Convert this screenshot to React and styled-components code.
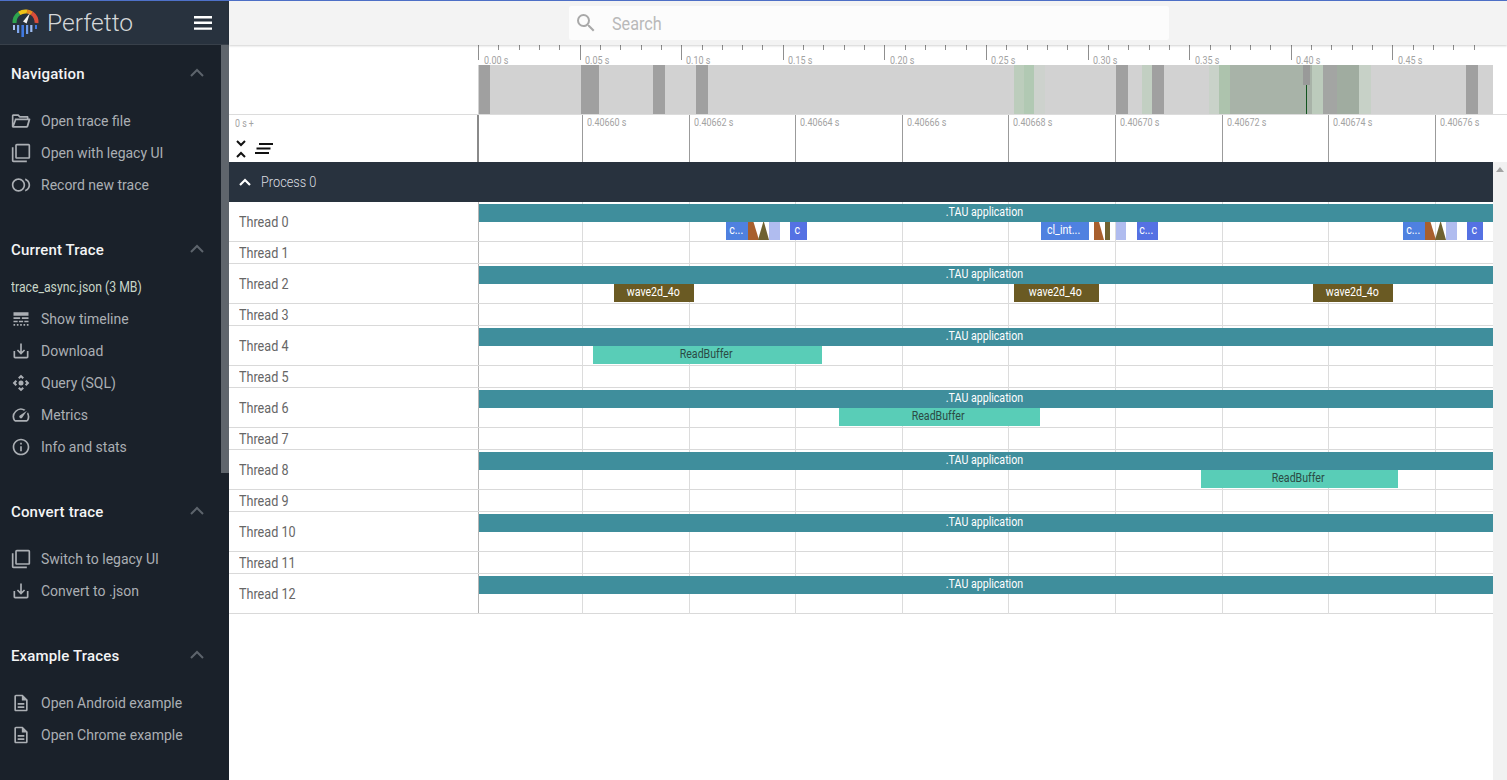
import React from 'react';
import styled, { createGlobalStyle } from 'styled-components';

const GlobalStyle = createGlobalStyle`
  html, body, #root {
    margin: 0;
    height: 100%;
    overflow: hidden;
  }
  body {
    font-family: Roboto, "Liberation Sans", sans-serif;
    background: #fff;
  }
`;

const TIME_START = 478;
const AXIS_TICK = 20.32;
const GRID_LINES = [582, 689, 795, 902, 1008, 1115, 1222, 1328, 1435];

const AppShell = styled.div`
  display: grid;
  grid-template-columns: 229px 1fr;
  height: 780px;
  border-top: 1px solid #4e71c9;
  box-sizing: border-box;
`;

const Sidebar = styled.nav`
  display: flex;
  flex-direction: column;
  background: #1a212a;
  min-height: 0;
  overflow: hidden;
`;

const SidebarHeader = styled.header`
  display: flex;
  align-items: center;
  height: 44px;
  flex: none;
  padding: 0 17px 0 12px;
  background: #28323e;
  border-bottom: 1px solid #38404a;
  box-sizing: border-box;
`;

const LogoName = styled.span`
  flex: 1;
  margin-left: 8px;
  font-size: 24.6px;
  font-weight: 300;
  color: #d5d7d9;
`;

const MenuButton = styled.svg`
  display: block;
  width: 18px;
  height: 14px;
`;

const SidebarBody = styled.div`
  position: relative;
  flex: 1;
  padding-right: 8px;
`;

const SidebarThumb = styled.div`
  position: absolute;
  top: 0;
  right: 0;
  width: 8px;
  height: 428px;
  background: #5f656c;
`;

const Section = styled.section`
  padding-top: ${p => p.$top}px;
`;

const SectionTitle = styled.h2`
  display: flex;
  align-items: center;
  justify-content: space-between;
  height: 24px;
  margin: 0 0 ${p => p.$gap}px;
  padding: 0 18px 0 11px;
  font-size: 15px;
  font-weight: 500;
  letter-spacing: 0.15px;
  color: #f3f4f5;
`;

const Chevron = styled.svg`
  width: 24px;
  height: 24px;
  margin: -3px -6px 0 0;
  fill: none;
  stroke: #5d646c;
  stroke-width: 2;
`;

const ItemList = styled.ul`
  margin: 0;
  padding: 0;
  list-style: none;
`;

const Item = styled.li`
  display: flex;
  align-items: center;
  gap: 10px;
  height: 32px;
  padding-left: 11px;
  font-size: 14px;
  color: #abafb4;
  svg {
    width: 20px;
    height: 20px;
    flex: none;
    fill: #abafb4;
  }
`;

const Narrow = styled.span`
  display: inline-block;
  white-space: nowrap;
  transform: scaleX(${p => p.$scale});
  transform-origin: ${p => p.$origin || 'left'} center;
`;

const TraceName = styled.div`
  height: 32px;
  padding-left: 11px;
  font-size: 15px;
  line-height: 32px;
  color: #c8d6c8;
`;

const Main = styled.main`
  display: flex;
  flex-direction: column;
  min-width: 0;
`;

const Topbar = styled.div`
  display: flex;
  justify-content: center;
  align-items: center;
  height: 44px;
  flex: none;
  padding-left: 2px;
  background: #f3f3f3;
  box-shadow: 0 1px 2px rgba(0, 0, 0, 0.18);
  position: relative;
  z-index: 2;
`;

const SearchBox = styled.div`
  display: flex;
  align-items: center;
  width: 600px;
  height: 34px;
  padding-left: 5px;
  box-sizing: border-box;
  gap: 14px;
  background: #fcfcfc;
  border-radius: 2px;
  font-size: 18px;
  color: #b9b9b9;
  svg {
    width: 24px;
    height: 24px;
    fill: #a9a9a9;
  }
`;

const OverviewPanel = styled.div`
  display: grid;
  grid-template-columns: 249px 1fr;
  height: 70px;
  flex: none;
  border-bottom: 1px solid #dcdcdc;
  box-sizing: border-box;
`;

const OverviewTrack = styled.div`
  position: relative;
  width: 1015px;
`;

const AxisTick = styled.i`
  position: absolute;
  top: 0;
  width: 1px;
  height: ${p => (p.$major ? 15 : 5)}px;
  background: #8f8f8f;
`;

const AxisLabel = styled.span`
  position: absolute;
  top: 8px;
  font-size: 11.5px;
  color: #a3a3a3;
  white-space: nowrap;
`;

const OverviewBar = styled.div`
  position: absolute;
  top: 20px;
  left: 0;
  right: 0;
  height: 49px;
  background: #d2d2d2;
`;

const OverviewBand = styled.i`
  position: absolute;
  top: 0;
  bottom: 0;
  background: ${p => p.$color};
`;

const MarkerHead = styled.i`
  position: absolute;
  top: 0;
  left: 825px;
  width: 7px;
  height: 20px;
  background: #999a99;
`;

const MarkerLine = styled.i`
  position: absolute;
  top: 20px;
  bottom: 0;
  left: 828px;
  width: 1px;
  background: #12541f;
`;

const TimeHeader = styled.div`
  display: grid;
  grid-template-columns: 249px 1fr;
  height: 47px;
  flex: none;
`;

const HeaderTools = styled.div`
  display: flex;
  flex-direction: column;
  justify-content: space-between;
  padding: 2px 0 4px 6px;
  box-sizing: border-box;
  font-size: 11px;
  color: #a3a3a3;
`;

const ToolIcons = styled.div`
  display: flex;
  align-items: center;
  gap: 8px;
  svg {
    display: block;
  }
`;

const HeaderScale = styled.div`
  position: relative;
  border-left: 2px solid #8a8a8a;
  margin-left: -1px;
`;

const ScaleLine = styled.i`
  position: absolute;
  top: 0;
  bottom: 0;
  width: 1px;
  background: #9b9b9b;
`;

const ScaleLabel = styled.span`
  position: absolute;
  top: 0;
  font-size: 11.5px;
  color: #a3a3a3;
  white-space: nowrap;
`;

const Workspace = styled.div`
  display: grid;
  grid-template-columns: 1fr 14px;
  flex: 1;
  min-height: 0;
`;

const FakeScrollbar = styled.div`
  background: #f1f1f1;
  padding-top: 5px;
  display: flex;
  justify-content: center;
  svg {
    width: 8px;
    height: 5px;
    fill: #a3a3a3;
  }
`;

const ProcessHeader = styled.div`
  display: flex;
  align-items: center;
  gap: 9px;
  height: 40px;
  padding-left: 9px;
  background: #28323e;
  font-size: 15px;
  font-weight: 300;
  color: #dcdee0;
  svg {
    width: 14px;
    height: 10px;
    fill: none;
    stroke: #fff;
    stroke-width: 2.2;
  }
`;

const TrackRow = styled.div`
  display: grid;
  grid-template-columns: 249px 1fr;
  height: ${p => (p.$tall ? 40 : 22)}px;
  border-bottom: 1px solid #d9d9d9;
  box-sizing: border-box;
`;

const TrackName = styled.div`
  display: flex;
  align-items: center;
  padding-left: 10px;
  font-size: 15px;
  color: #666;
`;

const TrackCanvas = styled.div`
  position: relative;
  border-left: 1px solid #b5b5b5;
`;

const GridLine = styled.i`
  position: absolute;
  top: 0;
  bottom: -1px;
  width: 1px;
  background: #dcdcdc;
`;

const Slice = styled.div`
  position: absolute;
  top: ${p => (p.$depth ? 20 : 2)}px;
  height: 18px;
  padding-right: ${p => (p.$depth ? 2 : 3)}px;
  box-sizing: border-box;
  background: ${p => p.$color};
  color: ${p => p.$ink || '#fff'};
  font-size: 12.5px;
  line-height: 16px;
  text-align: center;
  overflow: hidden;
  white-space: nowrap;
  clip-path: ${p => p.$clip || 'none'};
`;

const Icon = ({ d, children }) => (
  <svg viewBox="0 0 24 24">
    {d && <path d={d} />}
    {children}
  </svg>
);

const paths = {
  copy: 'M3 5H1v16c0 1.1.9 2 2 2h16v-2H3V5zm18-4H7c-1.1 0-2 .9-2 2v14c0 1.1.9 2 2 2h14c1.1 0 2-.9 2-2V3c0-1.1-.9-2-2-2zm0 16H7V3h14v14z',
  record: 'M9 4c-4.42 0-8 3.58-8 8s3.58 8 8 8 8-3.58 8-8-3.58-8-8-8zm0 14c-3.31 0-6-2.69-6-6s2.69-6 6-6 6 2.69 6 6-2.69 6-6 6zM17 4.26v2.09c2.33.82 4 3.04 4 5.65s-1.67 4.83-4 5.65v2.09c3.45-.89 6-4.01 6-7.74s-2.55-6.85-6-7.74z',
  timeline: 'M3 16h5v-2H3v2zm6.5 0h5v-2h-5v2zm6.5 0h5v-2h-5v2zM3 20h2v-2H3v2zm4 0h2v-2H7v2zm4 0h2v-2h-2v2zm4 0h2v-2h-2v2zm4 0h2v-2h-2v2zM3 12h8v-2H3v2zm10 0h8v-2h-8v2zM3 4v4h18V4H3z',
  download: 'M19 12v7H5v-7H3v7c0 1.1.9 2 2 2h14c1.1 0 2-.9 2-2v-7h-2zm-6 .67l2.59-2.58L17 11.5l-5 5-5-5 1.41-1.41L11 12.67V3h2z',
  query: 'M15.54 5.54L13.77 7.3 12 5.54 10.23 7.3 8.46 5.54 12 2l3.54 3.54zm2.92 10l-1.76-1.77L18.46 12l-1.76-1.77 1.76-1.77L22 12l-3.54 3.54zm-10 2.92l1.77-1.76L12 18.46l1.77-1.76 1.77 1.76L12 22l-3.54-3.54zm-2.92-10l1.76 1.77L5.54 12l1.76 1.77-1.76 1.77L2 12l3.54-3.54zM12 9a3 3 0 1 0 0 6 3 3 0 0 0 0-6z',
  metrics: 'M20.38 8.57l-1.23 1.85a8 8 0 0 1-.22 7.58H5.07A8 8 0 0 1 15.58 6.85l1.85-1.23A10 10 0 0 0 3.35 19a2 2 0 0 0 1.72 1h13.85a2 2 0 0 0 1.74-1 10 10 0 0 0-.27-10.44zM10.59 15.41a2 2 0 0 0 2.83 0l5.66-8.49-8.49 5.66a2 2 0 0 0 0 2.83z',
  info: 'M11 7h2v2h-2zm0 4h2v6h-2zm1-9C6.48 2 2 6.48 2 12s4.48 10 10 10 10-4.48 10-10S17.52 2 12 2zm0 18c-4.41 0-8-3.59-8-8s3.59-8 8-8 8 3.59 8 8-3.59 8-8 8z',
  doc: 'M8 16h8v2H8zm0-4h8v2H8zm6-10H6c-1.1 0-2 .9-2 2v16c0 1.1.89 2 1.99 2H18c1.1 0 2-.9 2-2V8l-6-6zm4 18H6V4h7v5h5v11z',
  folder: 'M3.8 4H9l2 2h8.6c.8 0 1.4.6 1.4 1.4V9h1.2c.8 0 1.2.6 1 1.3l-2.4 8.4c-.2.8-.8 1.3-1.6 1.3H2.4C1.6 20 1 19.4 1 18.6V5.8C1 4.8 1.9 4 3 4h.8zM3 6v8.8L4.8 9H19V8h-8.8l-2-2H3zm3.3 5l-2.6 7h15l2-7H6.3z',
};

const SectionHead = ({ title, gap }) => (
  <SectionTitle $gap={gap}>
    {title}
    <Chevron viewBox="0 0 24 24">
      <path d="M6 15l6-6 6 6" />
    </Chevron>
  </SectionTitle>
);

const Logo = () => (
  <svg width="27" height="29" viewBox="0 0 27 29" style={{ flex: 'none' }}>
    <g fill="none" strokeWidth="4">
      <path d="M2.5 15A11 11 0 0 1 7.2 5.4" stroke="#2ea44f" />
      <path d="M7.2 5.4A11 11 0 0 1 15 3.6" stroke="#f0c419" />
      <path d="M15 3.6A11 11 0 0 1 20 5.4" stroke="#ea8a1e" />
      <path d="M20 5.4A11 11 0 0 1 24.5 15" stroke="#d94d3a" />
    </g>
    <path d="M18 5l-3.4 10.4-3.6-2z" fill="#f2f2f2" />
    <rect x="1" y="17" width="2" height="5" fill="#a9c3f2" />
    <rect x="5" y="17" width="2.2" height="8" fill="#7ea6ee" />
    <rect x="9.4" y="17" width="2.6" height="12" fill="#3f78e0" />
    <rect x="14" y="17" width="2.2" height="9" fill="#6e9cec" />
    <rect x="18.2" y="17" width="2.2" height="7" fill="#9dbcf1" />
    <rect x="23" y="17" width="2" height="4" fill="#3f78e0" />
  </svg>
);

const AXIS_TICKS = Array.from({ length: 50 }, (_, i) => i);
const AXIS_LABELS = [
  [6, '0.00 s'], [107, '0.05 s'], [208, '0.10 s'], [310, '0.15 s'], [412, '0.20 s'],
  [513, '0.25 s'], [615, '0.30 s'], [717, '0.35 s'], [818, '0.40 s'], [920, '0.45 s'],
];

const BANDS = [
  [479, 490, '#a0a0a0'], [581, 599, '#a0a0a0'], [653, 665, '#a0a0a0'], [696, 708, '#a0a0a0'],
  [1014, 1024, '#bccdbc'], [1024, 1034, '#b1c9b3'], [1034, 1045, '#cdd2cd'],
  [1116, 1128, '#a0a0a0'], [1142, 1152, '#c2cfc2'], [1152, 1164, '#a0a0a0'],
  [1209, 1219, '#c9d2c9'], [1219, 1230, '#adc3ad'], [1230, 1312, '#a8b3a8'],
  [1312, 1323, '#bccbbc'], [1323, 1337, '#a3a5a3'], [1337, 1359, '#a0aca0'],
  [1359, 1371, '#c7d1c7'], [1466, 1478, '#a0a0a0'],
];

const SCALE_LABELS = ['0.40660 s', '0.40662 s', '0.40664 s', '0.40666 s', '0.40668 s', '0.40670 s', '0.40672 s', '0.40674 s', '0.40676 s'];

const BLUE = '#4f81e0';
const INDIGO = '#5571e3';
const PALE = '#b0bcef';
const BROWN = '#a85f2d';
const OLIVE = '#6f6230';
const TEAL = '#59cdb7';
const WAVE = '#6a5a23';

const wedge = 'polygon(0 0, 50% 0, 100% 100%, 0 100%)';
const peak = 'polygon(0 100%, 48% 0, 54% 0, 100% 100%)';

const clusterOne = [
  [726, 748, BLUE, 'c...'], [748, 759, BROWN, '', wedge], [758, 769, OLIVE, '', peak],
  [769, 780, PALE, ''], [790, 807, INDIGO, 'c'],
  [1041, 1089, BLUE, 'cl_int...'], [1094, 1104, BROWN, '', wedge],
  [1105, 1110, OLIVE, ''], [1116, 1126, PALE, ''], [1137, 1158, INDIGO, 'c...'],
  [1403, 1425, BLUE, 'c...'], [1425, 1436, BROWN, '', wedge], [1435, 1446, OLIVE, '', peak],
  [1446, 1457, PALE, ''], [1467, 1483, INDIGO, 'c'],
];

const TRACKS = [
  { name: 'Thread 0', tall: true, slices: clusterOne },
  { name: 'Thread 1' },
  { name: 'Thread 2', tall: true, slices: [[614, 694, WAVE, 'wave2d_4o'], [1014, 1099, WAVE, 'wave2d_4o'], [1313, 1393, WAVE, 'wave2d_4o']] },
  { name: 'Thread 3' },
  { name: 'Thread 4', tall: true, slices: [[593, 822, TEAL, 'ReadBuffer']], ink: '#2b4a44' },
  { name: 'Thread 5' },
  { name: 'Thread 6', tall: true, slices: [[839, 1040, TEAL, 'ReadBuffer']], ink: '#2b4a44' },
  { name: 'Thread 7' },
  { name: 'Thread 8', tall: true, slices: [[1201, 1398, TEAL, 'ReadBuffer']], ink: '#2b4a44' },
  { name: 'Thread 9' },
  { name: 'Thread 10', tall: true },
  { name: 'Thread 11' },
  { name: 'Thread 12', tall: true },
];

const App = () => (
  <>
    <GlobalStyle />
    <AppShell>
      <Sidebar>
        <SidebarHeader>
          <Logo />
          <LogoName>Perfetto</LogoName>
          <MenuButton viewBox="0 0 18 14">
            <path d="M0 0h18v2.4H0zM0 5.6h18V8H0zM0 11.4h18v2.4H0z" fill="#fff" />
          </MenuButton>
        </SidebarHeader>
        <SidebarBody>
          <SidebarThumb />
          <Section $top={17}>
            <SectionHead title="Navigation" gap={19} />
            <ItemList>
              <Item><Icon d={paths.folder} />Open trace file</Item>
              <Item><Icon d={paths.copy} />Open with legacy UI</Item>
              <Item><Icon d={paths.record} />Record new trace</Item>
            </ItemList>
          </Section>
          <Section $top={37}>
            <SectionHead title="Current Trace" gap={9} />
            <TraceName><Narrow $scale={0.815}>trace_async.json (3 MB)</Narrow></TraceName>
            <ItemList>
              <Item><Icon d={paths.timeline} />Show timeline</Item>
              <Item><Icon d={paths.download} />Download</Item>
              <Item><Icon d={paths.query} />Query (SQL)</Item>
              <Item><Icon d={paths.metrics} />Metrics</Item>
              <Item><Icon d={paths.info} />Info and stats</Item>
            </ItemList>
          </Section>
          <Section $top={37}>
            <SectionHead title="Convert trace" gap={19} />
            <ItemList>
              <Item><Icon d={paths.copy} />Switch to legacy UI</Item>
              <Item><Icon d={paths.download} />Convert to .json</Item>
            </ItemList>
          </Section>
          <Section $top={37}>
            <SectionHead title="Example Traces" gap={19} />
            <ItemList>
              <Item><Icon d={paths.doc} />Open Android example</Item>
              <Item><Icon d={paths.doc} />Open Chrome example</Item>
            </ItemList>
          </Section>
        </SidebarBody>
      </Sidebar>
      <Main>
        <Topbar>
          <SearchBox>
            <svg viewBox="0 0 24 24">
              <path d="M15.5 14h-.79l-.28-.27A6.47 6.47 0 0 0 16 9.5 6.5 6.5 0 1 0 9.5 16c1.61 0 3.09-.59 4.23-1.57l.27.28v.79l5 4.99L20.49 19l-4.99-5zm-6 0C7.01 14 5 11.99 5 9.5S7.01 5 9.5 5 14 7.01 14 9.5 11.99 14 9.5 14z" />
            </svg>
            <Narrow $scale={0.9}>Search</Narrow>
          </SearchBox>
        </Topbar>
        <OverviewPanel>
          <div />
          <OverviewTrack>
            {AXIS_TICKS.map(i => (
              <AxisTick key={i} $major={i % 5 === 0} style={{ left: Math.round(i * AXIS_TICK) }} />
            ))}
            {AXIS_LABELS.map(([left, text]) => (
              <AxisLabel key={text} style={{ left }}>
                <Narrow $scale={0.78}>{text}</Narrow>
              </AxisLabel>
            ))}
            <OverviewBar>
              {BANDS.map(([from, to, color]) => (
                <OverviewBand
                  key={from}
                  $color={color}
                  style={{ left: from - TIME_START, width: to - from }}
                />
              ))}
              <MarkerHead />
              <MarkerLine />
            </OverviewBar>
          </OverviewTrack>
        </OverviewPanel>
        <TimeHeader>
          <HeaderTools>
            <span><Narrow $scale={0.8}>0 s +</Narrow></span>
            <ToolIcons>
              <svg width="12" height="18" viewBox="0 0 12 18">
                <path d="M2 1l4 4 4-4M2 17l4-4 4 4" fill="none" stroke="#111" strokeWidth="2" />
              </svg>
              <svg width="18" height="12" viewBox="0 0 18 12">
                <path d="M4 0h14v2H4zM1.5 4.5h14v2h-14zM0 9h14v2H0z" fill="#111" />
              </svg>
            </ToolIcons>
          </HeaderTools>
          <HeaderScale>
            {GRID_LINES.map((x, i) => (
              <React.Fragment key={x}>
                <ScaleLine style={{ left: x - TIME_START - 1 }} />
                <ScaleLabel style={{ left: x - TIME_START + 4 }}>
                  <Narrow $scale={0.78}>{SCALE_LABELS[i]}</Narrow>
                </ScaleLabel>
              </React.Fragment>
            ))}
          </HeaderScale>
        </TimeHeader>
        <Workspace>
          <div>
            <ProcessHeader>
              <svg viewBox="0 0 14 10">
                <path d="M2 8l5-5 5 5" />
              </svg>
              <Narrow $scale={0.85}>Process 0</Narrow>
            </ProcessHeader>
            {TRACKS.map(track => (
              <TrackRow key={track.name} $tall={track.tall}>
                <TrackName><Narrow $scale={0.84}>{track.name}</Narrow></TrackName>
                <TrackCanvas>
                  {GRID_LINES.map(x => (
                    <GridLine key={x} style={{ left: x - TIME_START - 1 }} />
                  ))}
                  {track.tall && (
                    <Slice $color="#3f8e9c" style={{ left: 0, right: 0 }}>
                      <Narrow $scale={0.85} $origin="center">.TAU application</Narrow>
                    </Slice>
                  )}
                  {(track.slices || []).map(([from, to, color, label, clip]) => (
                    <Slice
                      key={from}
                      $depth
                      $color={color}
                      $clip={clip}
                      $ink={track.ink}
                      style={{ left: from - TIME_START - 1, width: to - from }}
                    >
                      <Narrow $scale={0.85} $origin="center">{label}</Narrow>
                    </Slice>
                  ))}
                </TrackCanvas>
              </TrackRow>
            ))}
          </div>
          <FakeScrollbar>
            <svg viewBox="0 0 8 5">
              <path d="M4 0l4 5H0z" />
            </svg>
          </FakeScrollbar>
        </Workspace>
      </Main>
    </AppShell>
  </>
);

export default App;
